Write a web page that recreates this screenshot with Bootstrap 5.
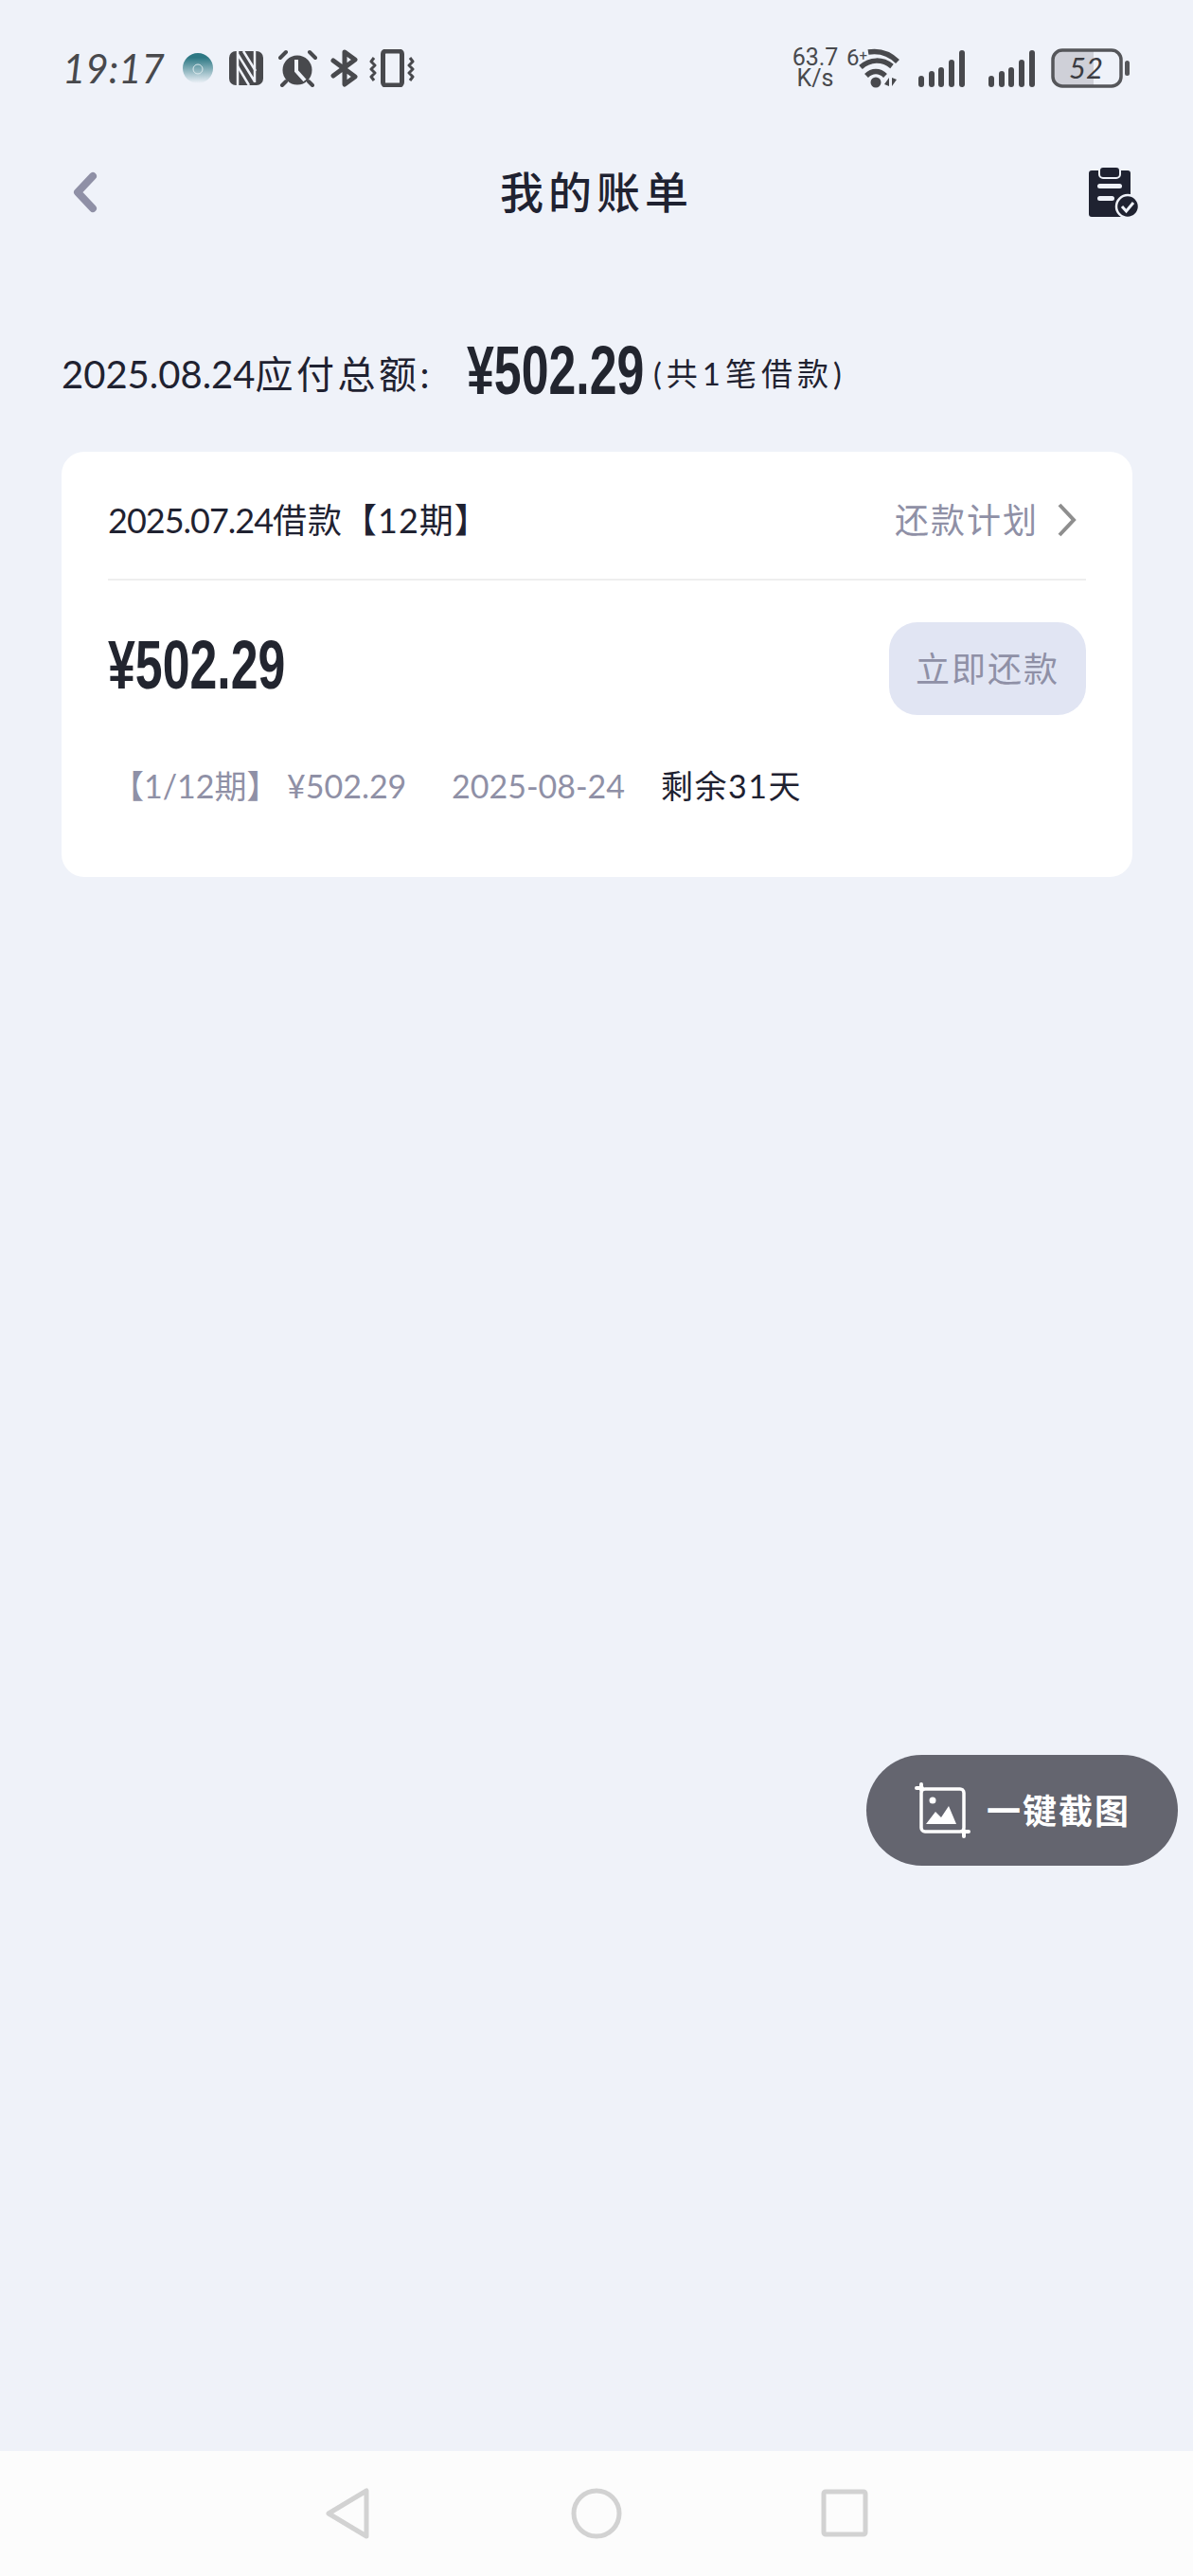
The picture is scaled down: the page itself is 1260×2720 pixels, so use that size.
<!DOCTYPE html>
<html lang="zh-CN">
  <head>
    <meta charset="UTF-8" />
    <title>我的账单</title>
    <link href="https://cdn.jsdelivr.net/npm/bootstrap@5.3.0/dist/css/bootstrap.min.css" rel="stylesheet" />
    <style>
      body {
        background: #eff2f9;
        color: #1f2231;
        font-family: "Lato", "Noto Sans CJK SC", sans-serif;
      }
      .page-shell { height: 2720px; }
      .status-row { height: 144px; padding: 0 66px; color: #48494d; }
      .clock-text { font-size: 42px; font-style: italic; line-height: 1; width: 118px; white-space: nowrap; }
      .speed-text { font-family: "Roboto", sans-serif; font-size: 25px; line-height: 22px; width: 54px; text-align: center; }
      .net-text { font-family: "Roboto", sans-serif; font-size: 24px; line-height: 1; width: 20px; margin-left: 6px; margin-right: -7px; margin-top: -22px; white-space: nowrap; }
      .net-text sup { font-size: 15px; top: -.35em; }
      .title-row { height: 118px; padding: 0 56px 0 77px; }
      .back-slot { width: 33px; }
      .page-title { font-size: 46px; font-weight: 500; letter-spacing: 5px; line-height: 1; }
      .summary-row { height: 86px; margin: 90px 65px 39px; white-space: nowrap; }
      .summary-label { font-size: 40px; width: 428px; }
      .summary-label b { font-weight: 400; letter-spacing: 3.5px; }
      .big-money { font-family: "Liberation Sans", sans-serif; font-weight: 700; font-size: 72px; color: #22252f; line-height: 1; width: 184px; margin-top: -8px; transform: scaleX(.72); transform-origin: left center; white-space: nowrap; }
      .summary-money { width: 197px; }
      .summary-note { font-size: 33px; letter-spacing: 5px; }
      .bill-card { margin: 0 64px 0 65px; height: 449px; padding: 0 49px; border-radius: 24px; background: #fff; border: 0; }
      .bill-head { height: 136px; padding-top: 9px; border-bottom: 2px solid #eeeeee; }
      .bill-title { font-size: 36px; white-space: nowrap; }
      .bill-title i { font-style: normal; letter-spacing: -1px; }
      .bill-title b { font-weight: 400; letter-spacing: 1px; }
      .muted-text { color: #8f90a6; }
      .plan-link { font-size: 36px; letter-spacing: 2px; margin-right: 10px; column-gap: 20px; }
      .bill-middle { margin-top: 44px; height: 98px; }
      .pay-btn { width: 208px; height: 98px; border-radius: 30px; background: #e1e5f3; border: 0; color: #8f90a6; font-size: 36px; letter-spacing: 2px; }
      .pay-btn:disabled { background: #e1e5f3; color: #8f90a6; opacity: 1; }
      .plan-row { height: 50px; margin-top: 50px; padding-left: 4px; font-size: 34px; white-space: nowrap; line-height: 50px; }
      .plan-period { width: 185px; }
      .plan-amount { width: 174px; }
      .plan-date { width: 221px; }
      .plan-left { letter-spacing: 1.500px; }
      .shot-btn { position: absolute; left: 915px; top: 1853px; width: 329px; height: 117px; border-radius: 59px; background: #64656f; color: #fff; font-size: 36px; font-weight: 700; border: 0; padding-left: 51px; letter-spacing: 2px; }
      .shot-btn:hover { background: #64656f; color: #fff; }
      .system-bar { height: 132px; background: #fcfcfc; }
      .system-icon { position: absolute; top: 38px; }
    </style>
  </head>

  <body>
    <div class="page-shell position-relative d-flex flex-column">
      <div class="status-row d-flex align-items-center justify-content-between">
        <div class="d-flex align-items-center">
          <span class="clock-text">19:17</span>
          <svg class="ms-2" width="34" height="34" viewBox="0 0 34 34">
            <defs>
              <linearGradient id="avatarFade" x1="0" y1="0" x2="0" y2="1">
                <stop offset="0.15" stop-color="#2d7884" />
                <stop offset="1" stop-color="#eff2f9" />
              </linearGradient>
            </defs>
            <circle cx="17" cy="17" r="16" fill="url(#avatarFade)" />
            <circle cx="17" cy="18" r="5" fill="none" stroke="#dbe9ec" stroke-width="1" />
          </svg>
          <svg class="ms-3" width="36" height="38" viewBox="0 0 36 38" fill="none">
            <rect y="1" width="36" height="36" rx="7" fill="#48494d" />
            <path d="M9 1V37M9 4 27 33M27 1V34" stroke="#eff2f9" stroke-width="2.500" />
            <path d="M15 1 28 22M9 17 21 37" stroke="#eff2f9" stroke-width="2.500" />
          </svg>
          <svg class="ms-3" width="47" height="40" viewBox="0 0 47 40" fill="none">
            <circle cx="20" cy="22" r="15.500" fill="#48494d" />
            <path d="M2 9 8 3M39 9 33 3M8 34 4 38M32 34 36 38" stroke="#48494d" stroke-width="4" stroke-linecap="round" />
            <path d="M19 11V23L28 33" stroke="#eff2f9" stroke-width="4" />
          </svg>
          <svg class="ms-2" width="33" height="40" viewBox="0 0 33 40" fill="none">
            <path d="M3 12 26 29 15 37V3L26 11 3 28" stroke="#48494d" stroke-width="5" stroke-linejoin="round" stroke-linecap="round" />
          </svg>
          <svg class="ms-2" width="48" height="40" viewBox="0 0 48 40" fill="none" stroke="#48494d">
            <rect x="14.500" y="2" width="20" height="36" rx="3" stroke-width="5" />
            <path d="M5 9 2 13 6 17 2 21 6 25 2 29 5 33M43 9 46 13 42 17 46 21 42 25 46 29 43 33" stroke-width="3" stroke-linejoin="round" />
          </svg>
        </div>

        <div class="d-flex align-items-center">
          <div class="speed-text">63.7<br />K/s</div>
          <span class="net-text">6<sup>+</sup></span>
          <svg width="47" height="44" viewBox="0 0 47 44" fill="none" stroke="#48494d">
            <path d="M10 5C22 3 33 7 41 15M2 21C12 12 25 12 35 20M8 30C14 24 22 24 28 30" stroke-width="5.500" />
            <circle cx="18" cy="37" r="5.500" fill="#48494d" stroke="none" />
            <path d="M32 41V32L27 39ZM35 32V41L40 34Z" fill="#48494d" stroke="none" />
          </svg>
          <svg class="ms-3" width="50" height="40" viewBox="0 0 50 40" fill="#48494d">
            <rect y="28" width="6" height="12" rx="3" />
            <rect x="11" y="23" width="6" height="17" rx="3" />
            <rect x="21" y="19" width="6" height="21" rx="3" />
            <rect x="32" y="11" width="6" height="29" rx="3" />
            <rect x="43" y="1" width="6" height="39" rx="3" />
          </svg>
          <svg class="ms-4" width="50" height="40" viewBox="0 0 50 40" fill="#48494d">
            <rect y="28" width="6" height="12" rx="3" />
            <rect x="11" y="23" width="6" height="17" rx="3" />
            <rect x="21" y="19" width="6" height="21" rx="3" />
            <rect x="32" y="11" width="6" height="29" rx="3" />
            <rect x="43" y="1" width="6" height="39" rx="3" />
          </svg>
          <svg class="ms-3" width="84" height="44" viewBox="0 0 84 44">
            <path d="M10 3H45V41H10A8 8 0 0 1 2 33V11A8 8 0 0 1 10 3Z" fill="#cfd0d8" />
            <rect x="2" y="3" width="72" height="38" rx="10" fill="none" stroke="#55565a" stroke-width="3.500" />
            <rect x="78" y="14" width="5" height="16" rx="2.500" fill="#55565a" />
            <text x="37" y="33" text-anchor="middle" font-family="Lato, sans-serif" font-style="italic" font-size="31" fill="#3b3c42">52</text>
          </svg>
        </div>
      </div>

      <div class="title-row d-flex align-items-center justify-content-between">
        <div class="back-slot">
          <svg class="d-block" width="26" height="44" viewBox="0 0 26 44" fill="none">
            <path d="M21 5 5 22 21 39" stroke="#8f90a6" stroke-width="8" stroke-linecap="round" stroke-linejoin="round" />
          </svg>
        </div>
        <span class="page-title">我的账单</span>
        <svg width="54" height="56" viewBox="0 0 54 56">
          <rect y="5" width="44" height="49" rx="3" fill="#1f2231" />
          <rect x="11" y="1" width="22" height="12" rx="4" fill="#1f2231" stroke="#eff2f9" stroke-width="2" />
          <rect x="9" y="19" width="26" height="5" rx="2.500" fill="#eff2f9" />
          <rect x="9" y="32" width="18" height="5" rx="2.500" fill="#eff2f9" />
          <circle cx="41" cy="43" r="12" fill="#1f2231" stroke="#eff2f9" stroke-width="2.500" />
          <path d="M35 43 39.500 48 47 39" fill="none" stroke="#eff2f9" stroke-width="3" />
        </svg>
      </div>

      <div class="summary-row d-flex align-items-center">
        <span class="summary-label">2025.08.24<b>应付总额:</b></span>
        <span class="big-money summary-money">¥502.29</span>
        <span class="summary-note">(共1笔借款)</span>
      </div>

      <div class="card bill-card">
        <div class="bill-head d-flex align-items-center justify-content-between">
          <span class="bill-title"><i>2025.07.24</i><b>借款【12期】</b></span>
          <span class="plan-link muted-text d-flex align-items-center">
            还款计划
            <svg width="20" height="36" viewBox="0 0 20 36" fill="none">
              <path d="M2 2 17 18 2 34" stroke="#8e8e8e" stroke-width="4" />
            </svg>
          </span>
        </div>
        <div class="bill-middle d-flex align-items-center justify-content-between">
          <span class="big-money">¥502.29</span>
          <button type="button" class="btn pay-btn p-0" disabled>立即还款</button>
        </div>
        <div class="plan-row d-flex">
          <span class="plan-period muted-text">【1/12期】</span>
          <span class="plan-amount muted-text">¥502.29</span>
          <span class="plan-date muted-text">2025-08-24</span>
          <span class="plan-left">剩余31天</span>
        </div>
      </div>

      <button type="button" class="btn shot-btn d-flex align-items-center">
        <svg class="me-3" width="60" height="60" viewBox="0 0 60 60" fill="none">
          <rect x="7" y="7" width="45" height="45" rx="4" stroke="#fff" stroke-width="3.500" />
          <path d="M2 6H8M7 2V8M52 57V51M57 52H51" stroke="#fff" stroke-width="4" stroke-linecap="round" />
          <circle cx="19" cy="19" r="3.500" fill="#fff" />
          <path d="M12 44 22 31 28 37 36 25 44 44Z" fill="#fff" />
        </svg>
        一键截图
      </button>

      <div class="system-bar mt-auto position-relative">
        <svg class="system-icon" style="left: 344px" width="46" height="56" viewBox="0 0 46 56" fill="none">
          <path d="M43 4V52L3 28Z" stroke="#d2d2d2" stroke-width="5" stroke-linejoin="round" />
        </svg>
        <svg class="system-icon" style="left: 602px" width="56" height="56" viewBox="0 0 56 56" fill="none">
          <circle cx="28" cy="28" r="24" stroke="#d2d2d2" stroke-width="5" />
        </svg>
        <svg class="system-icon" style="left: 867px" width="50" height="56" viewBox="0 0 50 56" fill="none">
          <rect x="3" y="5" width="44" height="45" rx="2" stroke="#d2d2d2" stroke-width="5" />
        </svg>
      </div>
    </div>
    <script src="https://cdn.jsdelivr.net/npm/bootstrap@5.3.0/dist/js/bootstrap.bundle.min.js"></script>
  </body>
</html>
